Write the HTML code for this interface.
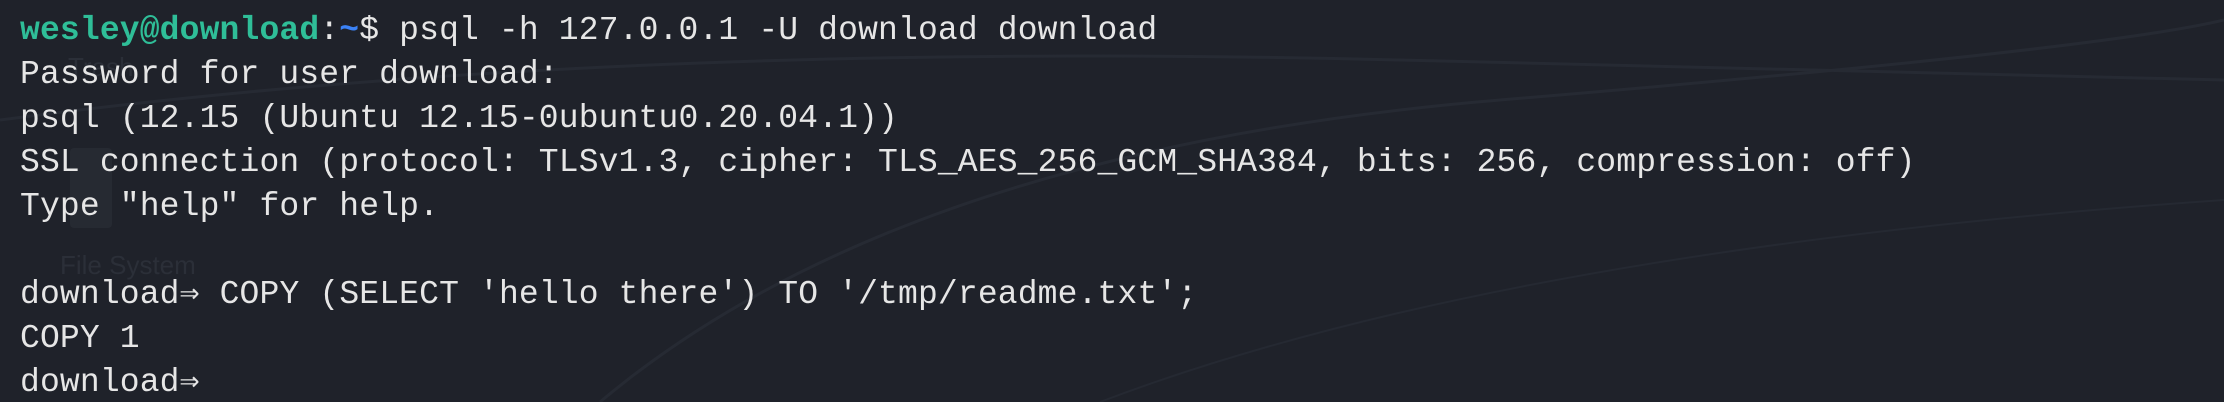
<!DOCTYPE html>
<html><head><meta charset="utf-8"><style>
html,body{margin:0;padding:0;overflow:hidden}
body{width:2224px;height:402px;background:#1f222a;position:relative}
.bg{position:absolute;inset:0}
pre{position:absolute;left:20px;top:9px;margin:0;font-family:"Liberation Mono","DejaVu Sans Mono",monospace;font-size:33px;line-height:44px;color:#e6e6e6;letter-spacing:0.15px}
.g{color:#2fbe98;font-weight:bold}
.b{color:#3b82f6;font-weight:bold}
.ghost{position:absolute;font-family:"Liberation Sans",sans-serif;color:#2b2f38;font-size:26px}
</style></head><body>
<svg class="bg" width="2224" height="402">
<path d="M0 120 Q600 40 1400 60 T2224 80" stroke="#262a33" stroke-width="3" fill="none"/>
<path d="M600 402 Q900 150 1500 100 T2224 20" stroke="#262a33" stroke-width="3" fill="none"/>
<path d="M1100 402 Q1500 250 2224 200" stroke="#252932" stroke-width="2" fill="none"/>
<rect x="70" y="148" width="42" height="80" rx="4" fill="#262a32"/>
</svg>
<div class="ghost" style="left:68px;top:52px">Trash</div>
<div class="ghost" style="left:60px;top:250px">File System</div>
<pre><span class="g">wesley@download</span>:<span class="b">~</span>$ psql -h 127.0.0.1 -U download download
Password for user download:
psql (12.15 (Ubuntu 12.15-0ubuntu0.20.04.1))
SSL connection (protocol: TLSv1.3, cipher: TLS_AES_256_GCM_SHA384, bits: 256, compression: off)
Type "help" for help.

download⇒ COPY (SELECT 'hello there') TO '/tmp/readme.txt';
COPY 1
download⇒ </pre>
</body></html>
